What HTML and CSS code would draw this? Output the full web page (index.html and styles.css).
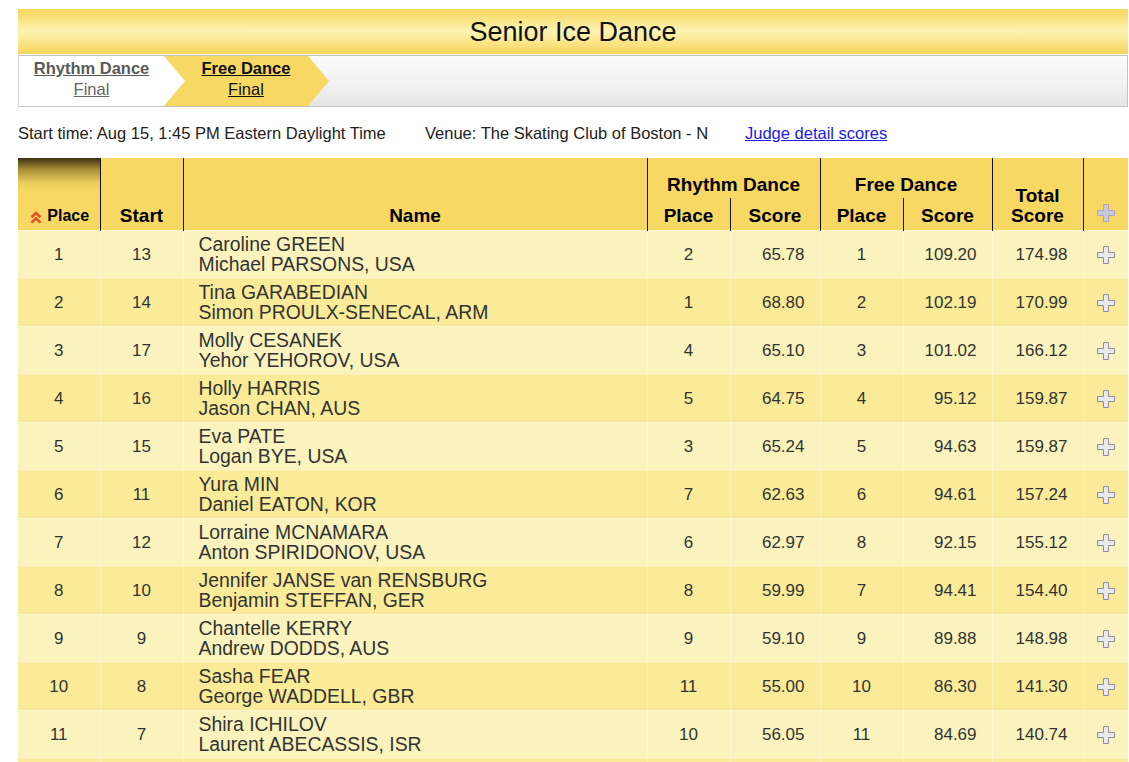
FILE: index.html
```html
<!DOCTYPE html>
<html>
<head>
<meta charset="utf-8">
<title>Senior Ice Dance</title>
<link rel="stylesheet" href="styles.css">
</head>
<body>
<div class="page">
  <div class="title-bar"><h1 class="title">Senior Ice Dance</h1></div>
  <div class="tabs">
    <a class="tab tab-done" href="#"><span class="tab-name">Rhythm Dance</span><span class="tab-sub">Final</span></a>
    <a class="tab tab-active" href="#"><span class="tab-name">Free Dance</span><span class="tab-sub">Final</span></a>
  </div>
  <div class="info">
    <span class="info-start">Start time: Aug 15, 1:45 PM Eastern Daylight Time</span>
    <span class="info-venue">Venue: The Skating Club of Boston - N</span>
    <a class="info-link" href="#">Judge detail scores</a>
  </div>
  <table class="results">
    <colgroup>
      <col class="c-place"><col class="c-start"><col class="c-name">
      <col class="c-rp"><col class="c-rs"><col class="c-fp"><col class="c-fs">
      <col class="c-tot"><col class="c-plus">
    </colgroup>
    <thead>
      <tr class="h1">
        <th rowspan="2" class="sorted"><div class="sort-wrap"><svg class="sort-icon" viewBox="0 0 12 13" width="12" height="13"><polyline points="1.5,6.2 6,2 10.5,6.2" fill="none" stroke="#e2522a" stroke-width="2.6"/><polyline points="1.5,11.6 6,7.4 10.5,11.6" fill="none" stroke="#e2522a" stroke-width="2.6"/></svg><span class="sort-label">Place</span></div></th>
        <th rowspan="2">Start</th>
        <th rowspan="2">Name</th>
        <th colspan="2" class="group">Rhythm Dance</th>
        <th colspan="2" class="group">Free Dance</th>
        <th rowspan="2">Total<br>Score</th>
        <th rowspan="2" class="plus-cell"><svg class="plus hdr" viewBox="0 0 18 18" width="18" height="18"><path d="M6.5 0.5 H11.5 V6.5 H17.5 V11.5 H11.5 V17.5 H6.5 V11.5 H0.5 V6.5 H6.5 Z" /></svg></th>
      </tr>
      <tr class="h2">
        <th>Place</th><th>Score</th><th>Place</th><th>Score</th>
      </tr>
    </thead>
    <tbody>
      <tr><td class="num">1</td><td class="num">13</td><td class="name">Caroline GREEN<br>Michael PARSONS, USA</td><td class="num">2</td><td class="score">65.78</td><td class="num">1</td><td class="score">109.20</td><td class="score">174.98</td><td class="plus-cell"><svg class="plus" viewBox="0 0 18 18" width="18" height="18"><path d="M6.5 0.5 H11.5 V6.5 H17.5 V11.5 H11.5 V17.5 H6.5 V11.5 H0.5 V6.5 H6.5 Z" /></svg></td></tr>
      <tr><td class="num">2</td><td class="num">14</td><td class="name">Tina GARABEDIAN<br>Simon PROULX-SENECAL, ARM</td><td class="num">1</td><td class="score">68.80</td><td class="num">2</td><td class="score">102.19</td><td class="score">170.99</td><td class="plus-cell"><svg class="plus" viewBox="0 0 18 18" width="18" height="18"><path d="M6.5 0.5 H11.5 V6.5 H17.5 V11.5 H11.5 V17.5 H6.5 V11.5 H0.5 V6.5 H6.5 Z" /></svg></td></tr>
      <tr><td class="num">3</td><td class="num">17</td><td class="name">Molly CESANEK<br>Yehor YEHOROV, USA</td><td class="num">4</td><td class="score">65.10</td><td class="num">3</td><td class="score">101.02</td><td class="score">166.12</td><td class="plus-cell"><svg class="plus" viewBox="0 0 18 18" width="18" height="18"><path d="M6.5 0.5 H11.5 V6.5 H17.5 V11.5 H11.5 V17.5 H6.5 V11.5 H0.5 V6.5 H6.5 Z" /></svg></td></tr>
      <tr><td class="num">4</td><td class="num">16</td><td class="name">Holly HARRIS<br>Jason CHAN, AUS</td><td class="num">5</td><td class="score">64.75</td><td class="num">4</td><td class="score">95.12</td><td class="score">159.87</td><td class="plus-cell"><svg class="plus" viewBox="0 0 18 18" width="18" height="18"><path d="M6.5 0.5 H11.5 V6.5 H17.5 V11.5 H11.5 V17.5 H6.5 V11.5 H0.5 V6.5 H6.5 Z" /></svg></td></tr>
      <tr><td class="num">5</td><td class="num">15</td><td class="name">Eva PATE<br>Logan BYE, USA</td><td class="num">3</td><td class="score">65.24</td><td class="num">5</td><td class="score">94.63</td><td class="score">159.87</td><td class="plus-cell"><svg class="plus" viewBox="0 0 18 18" width="18" height="18"><path d="M6.5 0.5 H11.5 V6.5 H17.5 V11.5 H11.5 V17.5 H6.5 V11.5 H0.5 V6.5 H6.5 Z" /></svg></td></tr>
      <tr><td class="num">6</td><td class="num">11</td><td class="name">Yura MIN<br>Daniel EATON, KOR</td><td class="num">7</td><td class="score">62.63</td><td class="num">6</td><td class="score">94.61</td><td class="score">157.24</td><td class="plus-cell"><svg class="plus" viewBox="0 0 18 18" width="18" height="18"><path d="M6.5 0.5 H11.5 V6.5 H17.5 V11.5 H11.5 V17.5 H6.5 V11.5 H0.5 V6.5 H6.5 Z" /></svg></td></tr>
      <tr><td class="num">7</td><td class="num">12</td><td class="name">Lorraine MCNAMARA<br>Anton SPIRIDONOV, USA</td><td class="num">6</td><td class="score">62.97</td><td class="num">8</td><td class="score">92.15</td><td class="score">155.12</td><td class="plus-cell"><svg class="plus" viewBox="0 0 18 18" width="18" height="18"><path d="M6.5 0.5 H11.5 V6.5 H17.5 V11.5 H11.5 V17.5 H6.5 V11.5 H0.5 V6.5 H6.5 Z" /></svg></td></tr>
      <tr><td class="num">8</td><td class="num">10</td><td class="name">Jennifer JANSE van RENSBURG<br>Benjamin STEFFAN, GER</td><td class="num">8</td><td class="score">59.99</td><td class="num">7</td><td class="score">94.41</td><td class="score">154.40</td><td class="plus-cell"><svg class="plus" viewBox="0 0 18 18" width="18" height="18"><path d="M6.5 0.5 H11.5 V6.5 H17.5 V11.5 H11.5 V17.5 H6.5 V11.5 H0.5 V6.5 H6.5 Z" /></svg></td></tr>
      <tr><td class="num">9</td><td class="num">9</td><td class="name">Chantelle KERRY<br>Andrew DODDS, AUS</td><td class="num">9</td><td class="score">59.10</td><td class="num">9</td><td class="score">89.88</td><td class="score">148.98</td><td class="plus-cell"><svg class="plus" viewBox="0 0 18 18" width="18" height="18"><path d="M6.5 0.5 H11.5 V6.5 H17.5 V11.5 H11.5 V17.5 H6.5 V11.5 H0.5 V6.5 H6.5 Z" /></svg></td></tr>
      <tr><td class="num">10</td><td class="num">8</td><td class="name">Sasha FEAR<br>George WADDELL, GBR</td><td class="num">11</td><td class="score">55.00</td><td class="num">10</td><td class="score">86.30</td><td class="score">141.30</td><td class="plus-cell"><svg class="plus" viewBox="0 0 18 18" width="18" height="18"><path d="M6.5 0.5 H11.5 V6.5 H17.5 V11.5 H11.5 V17.5 H6.5 V11.5 H0.5 V6.5 H6.5 Z" /></svg></td></tr>
      <tr><td class="num">11</td><td class="num">7</td><td class="name">Shira ICHILOV<br>Laurent ABECASSIS, ISR</td><td class="num">10</td><td class="score">56.05</td><td class="num">11</td><td class="score">84.69</td><td class="score">140.74</td><td class="plus-cell"><svg class="plus" viewBox="0 0 18 18" width="18" height="18"><path d="M6.5 0.5 H11.5 V6.5 H17.5 V11.5 H11.5 V17.5 H6.5 V11.5 H0.5 V6.5 H6.5 Z" /></svg></td></tr>
      <tr class="blank"><td></td><td></td><td></td><td></td><td></td><td></td><td></td><td></td><td></td></tr>
    </tbody>
  </table>
</div>
</body>
</html>
```

FILE: styles.css
```css
html, body {
  margin: 0;
  padding: 0;
  background: #ffffff;
}

body {
  font-family: "Liberation Sans", Arial, Helvetica, sans-serif;
  color: #222;
}

.page {
  width: 1110px;
  margin-left: 18px;
  padding-top: 9px;
}

.title-bar {
  height: 45px;
  background: linear-gradient(to bottom, #f6d65c 0%, #fbe98f 30%, #fdf3b4 50%, #fbe78b 72%, #f6d45a 100%);
  display: flex;
  align-items: center;
  justify-content: center;
}

.title {
  margin: 0;
  font-size: 27px;
  font-weight: normal;
  color: #111;
  line-height: 1;
  padding-top: 1px;
}

.tabs {
  margin-top: 1px;
  height: 50px;
  border: 1px solid #c4c4c4;
  border-left-color: #d6d6d6;
  background: linear-gradient(to bottom, #fbfbfb 0%, #f1f1f1 60%, #e6e6e6 100%);
  display: flex;
}

.tab {
  display: flex;
  flex-direction: column;
  align-items: center;
  justify-content: center;
  font-size: 16.5px;
  line-height: 21px;
  text-decoration: none;
  padding-bottom: 4px;
}

.tab-name {
  font-weight: bold;
  text-decoration: underline;
}

.tab-sub {
  text-decoration: underline;
}

.tab-done {
  width: 166px;
  padding-right: 21px;
  box-sizing: border-box;
  background: #ffffff;
  color: #5a5a5a;
  clip-path: polygon(0 0, 145px 0, 166px 50%, 145px 100%, 0 100%);
  position: relative;
  z-index: 1;
}

.tab-done .tab-sub {
  font-weight: normal;
  color: #666;
}

.tab-active {
  width: 166px;
  margin-left: -22px;
  padding-left: 20px;
  padding-right: 20px;
  box-sizing: border-box;
  background: #f7d862;
  color: #111;
  clip-path: polygon(0 0, 145px 0, 166px 50%, 145px 100%, 0 100%);
}

.info {
  height: 50px;
  display: flex;
  align-items: center;
  font-size: 16.5px;
  color: #222;
  padding-top: 1px;
}

.info-start {
  width: 407px;
}

.info-venue {
  width: 320px;
}

.info-link {
  color: #1a1aee;
  text-decoration: underline;
}

.results {
  width: 1110px;
  border-collapse: collapse;
  table-layout: fixed;
}

.c-place { width: 82px; }
.c-start { width: 83px; }
.c-name { width: 464px; }
.c-rp { width: 83px; }
.c-rs { width: 90px; }
.c-fp { width: 83px; }
.c-fs { width: 89px; }
.c-tot { width: 91px; }
.c-plus { width: 45px; }

.results thead th {
  background: #f7d862;
  color: #000;
  font-size: 19px;
  font-weight: bold;
  vertical-align: bottom;
  text-align: center;
  padding: 0 0 4px 0;
  line-height: 20px;
  border-left: 1px solid #111;
}

.results thead th:first-child {
  border-left: none;
}

.results thead .h1 {
  height: 40px;
}

.results thead .h1 th.group {
  vertical-align: middle;
  padding: 14px 0 0 0;
}

.results thead .h2 {
  height: 32px;
}

.results thead .h2 th {
  padding-bottom: 4px;
}

.results thead .h2 th:first-child {
  border-left: 1px solid #111;
}

.results thead th.sorted {
  background: linear-gradient(to bottom, #3b3212 0%, #a88f35 16%, #e9cb5c 34%, #f7d862 46%, #f7d862 100%);
  padding-bottom: 4px;
}

.sort-wrap {
  display: flex;
  justify-content: center;
  align-items: center;
  gap: 5px;
  margin-left: 2px;
}

.sort-icon {
  display: block;
  margin-top: 3px;
}

.sort-label {
  font-size: 16px;
}

.plus-cell {
  text-align: center;
}

.plus {
  display: inline-block;
  vertical-align: middle;
}

.plus path {
  fill: #e9e9ee;
  stroke: #8f8f98;
  stroke-width: 1;
}

.plus.hdr path {
  fill: #c9c9de;
  stroke: #a8a8b8;
}

.results thead th.plus-cell {
  padding-bottom: 7px;
}

.results tbody tr {
  height: 48px;
  background: #faf3bd;
}

.results tbody tr:nth-child(even) {
  background: #f9eb97;
}

.results tbody td {
  border-left: 1px solid rgba(255, 255, 255, 0.35);
  border-top: 1px solid rgba(255, 255, 255, 0.35);
  color: #333;
  font-size: 17px;
  line-height: 19px;
  padding: 0;
  vertical-align: middle;
}

.results tbody td:first-child {
  border-left: none;
}

.results tbody td.num {
  text-align: center;
}

.results tbody td.name {
  padding-left: 15px;
  font-size: 19.4px;
  line-height: 20px;
  padding-bottom: 1px;
}

.results tbody td.score {
  text-align: right;
  padding-right: 15px;
}
```
